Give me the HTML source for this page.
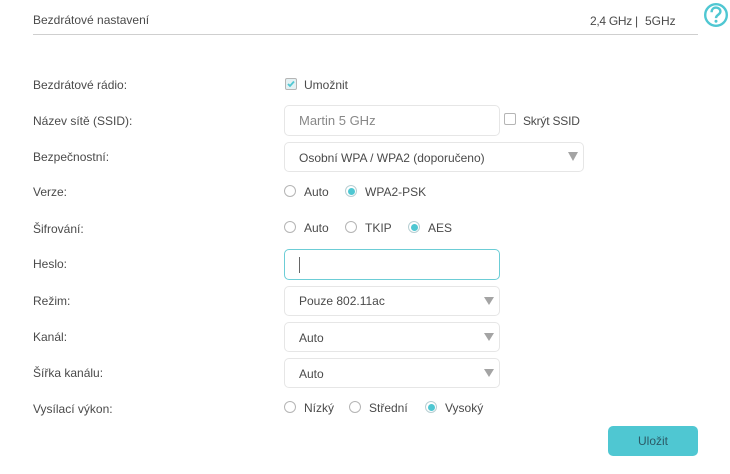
<!DOCTYPE html>
<html><head><meta charset="utf-8">
<style>
html,body{margin:0;padding:0;background:#fff}
body{width:730px;height:474px;position:relative;overflow:hidden;font-family:"Liberation Sans",sans-serif;font-size:12px;color:#4a4a4a}
.t{position:absolute;white-space:nowrap;line-height:14px}
.box{position:absolute;box-sizing:border-box;border:1px solid #e6e6e6;border-radius:5px;background:#fff;height:30px;left:284px}
.sel:after{content:"";position:absolute;right:5px;top:10px;border-left:5px solid transparent;border-right:5px solid transparent;border-top:8px solid #a4a4a4}
.box span{position:absolute;left:14px;top:7px;line-height:14px;white-space:nowrap}
.r{position:absolute;box-sizing:border-box;width:12px;height:12px;border:1px solid #b5b5b5;border-radius:50%;background:#fff}
.r.on{border-color:#b8cfd3}
.r.on:after{content:"";position:absolute;left:1.5px;top:1.5px;width:7px;height:7px;border-radius:50%;background:#4fc7d2}
.c{position:absolute;box-sizing:border-box;width:12px;height:12px;border:1px solid #b5b5b5;border-radius:2px;background:#fff}
.first:after{top:9px;border-top-width:9px}
</style></head>
<body>
<div class="t" style="left:33px;top:13px">Bezdrátové nastavení</div>
<div style="position:absolute;left:33px;top:34px;width:665px;height:1px;background:#cfcfcf"></div>
<div class="t" style="left:590px;top:14px;letter-spacing:-.3px">2,4 GHz |</div>
<div class="t" style="left:645px;top:14px">5GHz</div>
<svg style="position:absolute;left:703px;top:2px" width="26" height="26" viewBox="0 0 26 26"><circle cx="13" cy="13" r="10.8" fill="none" stroke="#4fc7d2" stroke-width="2.4"/><path d="M8.6 10.2c0-2.9 2-4.6 4.4-4.6s4.4 1.6 4.4 3.9c0 3.2-4.4 3.3-4.4 6.6" fill="none" stroke="#4fc7d2" stroke-width="2.4"/><circle cx="13" cy="19.2" r="1.5" fill="#4fc7d2"/></svg>

<div class="t" style="left:33px;top:78px">Bezdrátové rádio:</div>
<div class="t" style="left:33px;top:114px">Název sítě (SSID):</div>
<div class="t" style="left:33px;top:150px">Bezpečnostní:</div>
<div class="t" style="left:33px;top:185px">Verze:</div>
<div class="t" style="left:33px;top:222px">Šifrování:</div>
<div class="t" style="left:33px;top:257px">Heslo:</div>
<div class="t" style="left:33px;top:294px">Režim:</div>
<div class="t" style="left:33px;top:330px">Kanál:</div>
<div class="t" style="left:33px;top:366px">Šířka kanálu:</div>
<div class="t" style="left:33px;top:402px">Vysílací výkon:</div>

<div class="c" style="left:285px;top:78px;border-color:#b5b5b5;background:#e4f1f3"></div>
<svg style="position:absolute;left:285px;top:78px" width="12" height="12" viewBox="0 0 12 12"><path d="M3 6l2 2 4-4.5" fill="none" stroke="#4fc7d2" stroke-width="1.8"/></svg>
<div class="t" style="left:304px;top:78px">Umožnit</div>

<div class="box" style="top:105px;width:216px;height:31px"><span style="color:#888;top:8px;font-size:13px">Martin 5 GHz</span></div>
<div class="c" style="left:504px;top:113px"></div>
<div class="t" style="left:523px;top:114px;letter-spacing:-.2px">Skrýt SSID</div>

<div class="box sel first" style="top:142px;width:300px"><span style="top:8px">Osobní WPA / WPA2 (doporučeno)</span></div>

<div class="r" style="left:284px;top:185px"></div>
<div class="t" style="left:304px;top:185px">Auto</div>
<div class="r on" style="left:345px;top:185px"></div>
<div class="t" style="left:365px;top:185px">WPA2-PSK</div>

<div class="r" style="left:284px;top:221px"></div>
<div class="t" style="left:304px;top:221px">Auto</div>
<div class="r" style="left:345px;top:221px"></div>
<div class="t" style="left:365px;top:221px">TKIP</div>
<div class="r on" style="left:408px;top:221px"></div>
<div class="t" style="left:428px;top:221px">AES</div>

<div class="box" style="top:249px;width:216px;height:31px;border-color:#6ccdd6"></div>
<div style="position:absolute;left:299px;top:257px;width:1px;height:16px;background:#666"></div>

<div class="box sel" style="top:286px;width:216px"><span>Pouze 802.11ac</span></div>
<div class="box sel" style="top:322px;width:216px"><span style="top:8px">Auto</span></div>
<div class="box sel" style="top:358px;width:216px"><span style="top:8px">Auto</span></div>

<div class="r" style="left:284px;top:401px"></div>
<div class="t" style="left:304px;top:401px">Nízký</div>
<div class="r" style="left:349px;top:401px"></div>
<div class="t" style="left:369px;top:401px">Střední</div>
<div class="r on" style="left:425px;top:401px"></div>
<div class="t" style="left:445px;top:401px">Vysoký</div>

<div style="position:absolute;left:608px;top:426px;width:90px;height:30px;border-radius:5px;background:#4fc7d2;text-align:center;line-height:31px;color:#2c5a66">Uložit</div>
</body></html>
